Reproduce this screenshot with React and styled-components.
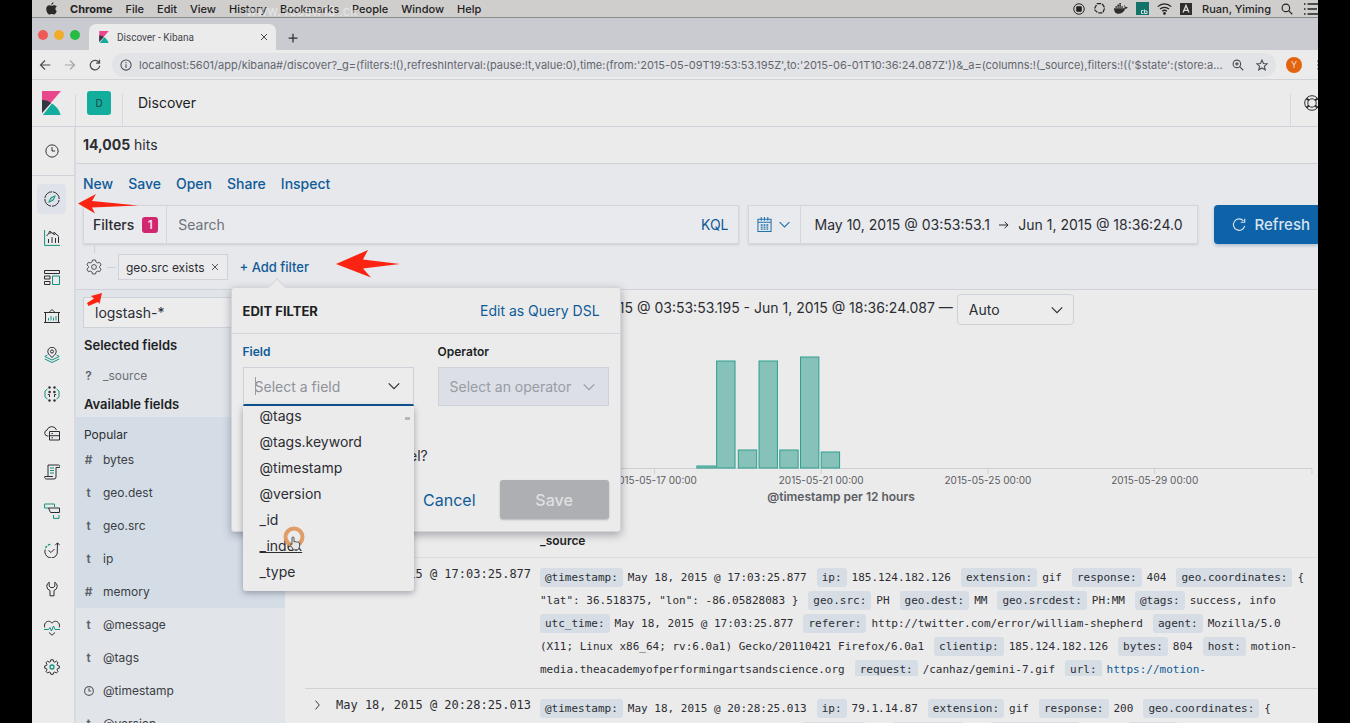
import React from "react";
import styled, { createGlobalStyle, css } from "styled-components";

const c = {
  ink: "#2b2d33",
  soft: "#6d7178",
  blue: "#0f5b98",
  teal: "#14917f",
  line: "#cfd2d8",
  paper: "#ebebeb",
  panel: "#e7e8eb",
};

const GlobalStyle = createGlobalStyle`
  *, *::before, *::after { box-sizing: border-box; }
  body { margin: 0; background: #000; }
  body, button, input, select { font-family: Inter, "Liberation Sans", sans-serif; }
  button, input, select { margin: 0; padding: 0; border: 0; background: none; color: inherit; font-size: inherit; outline: 0; }
  button { cursor: pointer; }
  a { text-decoration: none; color: inherit; }
  h1, h2, h3, ul, p { margin: 0; padding: 0; list-style: none; font-weight: inherit; }
  svg { display: block; flex: none; }
`;

/* ---------- frame ---------- */

const Stage = styled.div`
  height: 100vh;
  padding: 0 32px;
  overflow: hidden;
`;

const Screen = styled.div`
  position: relative;
  display: flex;
  flex-direction: column;
  height: 100%;
  overflow: hidden;
  background: ${c.paper};
  color: ${c.ink};
  font-size: 13px;
`;

/* ---------- mac menu bar ---------- */

const MenuBar = styled.header`
  position: relative;
  display: flex;
  align-items: center;
  gap: 13px;
  height: 18px;
  padding-left: 14px;
  flex: none;
  overflow: hidden;
  background: #cfcecd;
  border-bottom: 1px solid #8b8b8b;
  font-size: 11px;
  color: #222;
`;

const MenuItem = styled.span`
  font-weight: ${(p) => (p.$strong ? 700 : 500)};
  white-space: nowrap;
`;

const Watermark = styled.span`
  position: absolute;
  left: 214px;
  top: 4px;
  font-size: 13px;
  line-height: 14px;
  color: rgba(255, 255, 255, 0.5);
`;

const Tray = styled.div`
  display: flex;
  align-items: center;
  gap: 10px;
  margin-left: auto;
  margin-right: -1px;
`;

const TrayIcons = styled.div`
  display: flex;
  align-items: center;
  gap: 8px;
`;

/* ---------- browser chrome ---------- */

const TabStrip = styled.div`
  display: flex;
  align-items: flex-end;
  height: 32px;
  flex: none;
  padding-left: 6px;
  background: #cacbd0;
`;

const Lights = styled.div`
  display: flex;
  gap: 6px;
  padding-bottom: 10px;
  margin-right: 9px;
`;

const Light = styled.span`
  width: 10px;
  height: 10px;
  border-radius: 50%;
  background: ${(p) => p.$color};
`;

const BrowserTab = styled.div`
  display: flex;
  align-items: center;
  gap: 8px;
  width: 187px;
  height: 26px;
  padding: 0 8px 0 10px;
  border-radius: 7px 7px 0 0;
  background: ${c.paper};
  font-family: Roboto, sans-serif;
  font-size: 10px;
  color: #45474c;
`;

const TabClose = styled.button`
  margin-left: auto;
`;

const NewTab = styled.button`
  padding: 0 0 7px 12px;
`;

const AddressRow = styled.div`
  display: flex;
  align-items: center;
  height: 30px;
  flex: none;
  padding-left: 7px;
  border-bottom: 1px solid #d2d3d8;
  overflow: hidden;
`;

const NavButtons = styled.div`
  display: flex;
  gap: 13px;
  color: #4c4f55;
`;

const UrlField = styled.label`
  display: flex;
  align-items: center;
  flex: 1;
  gap: 7px;
  height: 24px;
  margin: 0 10px 0 11px;
  padding: 0 8px;
  border-radius: 12px;
  background: #e2e3e7;
  color: #4c4f55;
`;

const UrlInput = styled.input`
  flex: 1;
  min-width: 0;
  font-size: 11px;
  color: #63666c;
`;

const UrlTools = styled.span`
  display: flex;
  gap: 12px;
`;

const Account = styled.button`
  width: 16px;
  height: 16px;
  margin-right: 15px;
  border-radius: 50%;
  background: #e2640f;
  color: #f4dccb;
  font-size: 9px;
  line-height: 16px;
`;

const Dots = styled.span`
  width: 3px;
  margin-right: -2px;
`;

/* ---------- kibana header ---------- */

const AppHeader = styled.header`
  display: flex;
  align-items: center;
  height: 47px;
  flex: none;
  border-bottom: 1px solid ${c.line};
  overflow: hidden;
`;

const HeaderCell = styled.div`
  display: flex;
  align-items: center;
  height: 32px;
  align-self: flex-end;
  padding-bottom: 15px;
  ${(p) => p.$line && css`border-left: 1px solid #d7d9dd;`}
`;

const LogoCell = styled(HeaderCell)`
  width: 43px;
  padding-left: 10px;
  overflow: visible;
`;

const SpaceCell = styled(HeaderCell)`
  width: 47px;
  padding-left: 11px;
`;

const TitleCell = styled(HeaderCell)`
  flex: 1;
  padding-left: 15px;
`;

const HelpCell = styled(HeaderCell)`
  width: 28px;
  padding-left: 13px;
`;

const Avatar = styled.span`
  width: 24px;
  height: 24px;
  border-radius: 3px;
  background: #12ad9c;
  color: #17544f;
  font-size: 10px;
  font-weight: 500;
  line-height: 24px;
  text-align: center;
`;

const PageTitle = styled.h1`
  font-size: 14px;
  font-weight: 400;
  color: #1d1f24;
`;

const Body = styled.div`
  display: flex;
  flex: 1;
  min-height: 0;
`;

/* ---------- side navigation ---------- */

const SideNav = styled.nav`
  width: 44px;
  flex: none;
  border-right: 2px solid #d8dadf;
`;

const NavRecent = styled.div`
  height: 49px;
  padding: 9px 5px;
  margin-bottom: 3px;
  border-bottom: 1px solid ${c.line};
`;

const NavList = styled.ul`
  display: flex;
  flex-direction: column;
  gap: 9px;
  padding: 5px;
`;

const NavLink = styled.a`
  display: flex;
  align-items: center;
  justify-content: center;
  width: 29px;
  height: 30px;
  border-radius: 4px;
  background: ${(p) => (p.$active ? "#dfe2e8" : "transparent")};
`;

/* ---------- main ---------- */

const Main = styled.main`
  display: flex;
  flex-direction: column;
  flex: 1;
  min-width: 0;
`;

const Hits = styled.p`
  height: 37px;
  flex: none;
  padding-left: 7px;
  border-bottom: 1px solid ${c.line};
  font-size: 14px;
  line-height: 35px;
`;

const QueryArea = styled.section`
  flex: none;
  padding: 7px 0 9px 7px;
  background: ${c.panel};
  border-bottom: 1px solid ${c.line};
`;

const TopMenu = styled.div`
  display: flex;
  gap: 15px;
  height: 24px;
  margin-bottom: 10px;
`;

const LinkButton = styled.button`
  color: ${c.blue};
  font-size: ${(p) => p.$size || 14}px;
  font-weight: ${(p) => p.$weight || 500};
  white-space: nowrap;
`;

const QueryRow = styled.div`
  display: flex;
  height: 39px;
  margin-bottom: 10px;
`;

const boxed = css`
  display: flex;
  align-items: center;
  border: 1px solid #d4d6dc;
  box-shadow: 0 1px 2px rgba(60, 70, 90, 0.16);
  background: #e9eaed;
`;

const SearchBox = styled.div`
  ${boxed}
  flex: 1;
  min-width: 0;
  margin-right: 9px;
`;

const FiltersButton = styled.button`
  display: flex;
  align-items: center;
  gap: 8px;
  height: 100%;
  padding: 0 8px 0 9px;
  border-right: 1px solid #d4d6dc;
  font-size: 14px;
  font-weight: 500;
`;

const Badge = styled.span`
  width: 16px;
  height: 16px;
  border-radius: 3px;
  background: #d02770;
  color: #f5dfe8;
  font-size: 12px;
  font-weight: 600;
  line-height: 16px;
`;

const SearchInput = styled.input`
  flex: 1;
  min-width: 0;
  padding-left: 11px;
  font-size: 14px;
  &::placeholder { color: ${c.soft}; opacity: 1; }
`;

const Kql = styled(LinkButton)`
  padding: 0 9px;
  font-weight: 400;
`;

const DateBox = styled.div`
  ${boxed}
  width: 450px;
  margin-right: 16px;
`;

const QuickDate = styled.button`
  display: flex;
  align-items: center;
  gap: 6px;
  height: 100%;
  padding: 0 9px 0 8px;
  border-right: 1px solid #d4d6dc;
  color: #2271ad;
`;

const DateRange = styled.div`
  display: flex;
  align-items: center;
  justify-content: space-between;
  flex: 1;
  padding: 0 14px;
  font-size: 14px;
`;

const DateButton = styled.button`
  white-space: nowrap;
`;

const Refresh = styled.button`
  display: flex;
  align-items: center;
  gap: 9px;
  padding: 0 8px 0 18px;
  border-radius: 4px 0 0 4px;
  background: #0e62a8;
  box-shadow: 0 2px 3px rgba(20, 80, 140, 0.25);
  color: #d9e4ee;
  font-size: 15px;
  font-weight: 500;
`;

const FilterRow = styled.div`
  display: flex;
  align-items: center;
  height: 26px;
`;

const FilterGear = styled.button`
  position: relative;
  padding: 0 4px 0 3px;
  color: #50545b;
  &::before {
    content: "";
    position: absolute;
    left: 11px;
    bottom: 22px;
    height: 9px;
    border-left: 1px solid ${c.line};
  }
`;

const Dash = styled.span`
  width: 9px;
  margin: 0 2px 0 1px;
  border-top: 1px solid ${c.line};
`;

const Pill = styled.span`
  display: flex;
  align-items: center;
  gap: 6px;
  height: 26px;
  padding: 0 8px 0 7px;
  margin-right: 12px;
  border: 1px solid ${c.line};
  background: #ebebed;
  font-size: 12px;
  white-space: nowrap;
`;

/* ---------- filter popover ---------- */

const PopoverAnchor = styled.div`
  position: relative;
`;

const Popover = styled.form`
  position: absolute;
  z-index: 3;
  top: 28px;
  left: -9px;
  width: 390px;
  border: 1px solid #d3d5da;
  border-radius: 3px;
  background: ${c.paper};
  box-shadow: 0 3px 8px rgba(50, 50, 70, 0.38);
  &::before {
    content: "";
    position: absolute;
    top: -7px;
    left: 38px;
    width: 14px;
    height: 14px;
    background: ${c.paper};
    border: 1px solid #d3d5da;
    border-width: 1px 0 0 1px;
    transform: rotate(45deg);
  }
`;

const PopoverHead = styled.div`
  position: relative;
  display: flex;
  align-items: center;
  justify-content: space-between;
  height: 46px;
  padding: 0 20px 0 11px;
  border-bottom: 1px solid #d3d5da;
`;

const PopoverTitle = styled.h2`
  font-size: 13px;
  font-weight: 700;
  color: #1d1f24;
`;

const PopoverBody = styled.div`
  padding: 10px 11px 12px;
`;

const FieldGrid = styled.div`
  display: grid;
  grid-template-columns: 1fr 1fr;
  gap: 24px;
`;

const FormField = styled.div`
  position: relative;
`;

const FieldLabel = styled.label`
  display: block;
  height: 23px;
  font-size: 12px;
  font-weight: 600;
  line-height: 16px;
  color: ${(p) => (p.$focused ? c.blue : "#1d1f24")};
`;

const SelectShell = styled.div`
  position: relative;
  display: flex;
  align-items: center;
  width: ${(p) => p.$width || "100%"};
  height: ${(p) => p.$height || 39}px;
  border: 1px solid #cdd1d8;
  border-radius: ${(p) => (p.$round ? 4 : 0)}px;
  background: ${(p) => (p.$disabled ? "#dcdfe6" : "#ececed")};
  color: ${(p) => (p.$disabled ? "#989ca5" : c.ink)};
  font-size: 14px;
  ${(p) => p.$focused && css`border-bottom: 2px solid #0d5493;`}

  input, select {
    width: 100%;
    height: 100%;
    padding: 0 32px 0 11px;
    appearance: none;
    opacity: 1;
  }
  input::placeholder { color: #8f9299; opacity: 1; }
  svg { position: absolute; right: ${(p) => p.$inset || 12}px; pointer-events: none; }
`;

const Caret = styled.span`
  position: absolute;
  left: 11px;
  height: 18px;
  border-left: 1px solid #9a9ca2;
`;

const OptionList = styled.ul`
  position: absolute;
  z-index: 1;
  top: 100%;
  left: 0;
  right: 0;
  height: 185px;
  padding-left: 17px;
  overflow: hidden;
  border-radius: 0 0 3px 3px;
  background: ${c.paper};
  box-shadow: 0 2px 6px rgba(50, 50, 70, 0.4);
  &::after {
    content: "";
    position: absolute;
    top: 11px;
    right: 4px;
    width: 5px;
    height: 3px;
    background: #b5b7bb;
  }
`;

const Option = styled.li`
  height: 26px;
  font-size: 14px;
  line-height: 20px;
  text-decoration: ${(p) => (p.$hover ? "underline" : "none")};
`;

const Pointer = styled.span`
  position: absolute;
  top: 119px;
  left: 40px;
`;

const CustomLabel = styled.label`
  display: flex;
  align-items: center;
  gap: 14px;
  height: 24px;
  margin: 37px 0 13px;
  font-size: 14px;
`;

const Switch = styled.input`
  appearance: none;
  width: 32px;
  height: 16px;
  border-radius: 8px;
  background: #b6b9bf;
`;

const PopoverFoot = styled.div`
  display: flex;
  justify-content: flex-end;
  gap: 24px;
`;

const SaveButton = styled.button`
  width: 109px;
  height: 39px;
  border-radius: 3px;
  background: #adafb3;
  box-shadow: 0 1px 2px rgba(60, 60, 70, 0.3);
  color: #dfe0e2;
  font-size: 16px;
  font-weight: 500;
`;

/* ---------- field sidebar ---------- */

const Content = styled.div`
  display: flex;
  flex: 1;
  min-height: 0;
`;

const Sidebar = styled.aside`
  width: 209px;
  flex: none;
  overflow: hidden;
  background: #e1e4e8;
`;

const PatternPicker = styled.div`
  padding: 7px 0 5px 7px;
`;

const GroupTitle = styled.h3`
  height: 24px;
  padding-left: 8px;
  font-size: 13px;
  font-weight: 600;
  line-height: 24px;
  color: #1d1f24;
`;

const FieldList = styled.ul`
  ${(p) => p.$spaced && css`padding-top: 2px;`}
  ${(p) => p.$popular && css`
    margin-top: 1px;
    background: #d4dde6;
  `}
`;

const PopularLabel = styled.p`
  height: 26px;
  padding: 9px 0 0 8px;
  font-size: 12px;
  line-height: 18px;
`;

const FieldItem = styled.li`
  display: grid;
  grid-template-columns: 19px 1fr;
  align-items: center;
  height: 33px;
  padding-left: 8px;
  font-size: 12px;
  color: ${(p) => (p.$muted ? c.soft : "#3a3d44")};
`;

const TypeMark = styled.span`
  width: 9px;
  font-weight: 600;
  text-align: center;
  color: #5b5f67;
`;

/* ---------- results ---------- */

const Results = styled.section`
  flex: 1;
  min-width: 0;
  overflow: hidden;
`;

const RangeLine = styled.div`
  display: flex;
  align-items: center;
  justify-content: center;
  gap: 4px;
  padding: 4px 0 0 18px;
  font-size: 14px;
  line-height: 16px;
  white-space: nowrap;
`;

const RangeText = styled.span`
  padding-bottom: 3px;
`;

const ChartBox = styled.div`
  height: 183px;
  padding: 0 6px 0 85px;
`;

const ChartSvg = styled.svg`
  width: 100%;
  height: 180px;
  overflow: visible;
  text { font-family: Inter, sans-serif; font-size: 10px; fill: #5a5d63; text-anchor: middle; }
  .title { font-size: 12px; font-weight: 600; }
`;

const DocTable = styled.table`
  width: calc(100% - 20px);
  margin: 15px 0 0 20px;
  border-collapse: separate;
  border-spacing: 0;
  table-layout: fixed;
  font-family: "DejaVu Sans Mono", monospace;
  font-size: 11px;
`;

const Th = styled.th`
  width: ${(p) => p.$width || "auto"};
  height: 35px;
  padding: 0;
  border-bottom: 1px solid #dcdde1;
  font-family: Inter, sans-serif;
  font-size: 12px;
  font-weight: 600;
  text-align: left;
  color: #1d1f24;
`;

const Td = styled.td`
  padding: 8px 0 0;
  border-bottom: 1px solid #cfd1d5;
  vertical-align: top;
  line-height: 16px;
  white-space: nowrap;
`;

const TimeCell = styled(Td)`
  font-size: 12px;
`;

const Expand = styled.button`
  display: block;
  padding: 3px 0 0 8px;
`;

const Source = styled.div`
  max-height: 110px;
  margin-bottom: 12px;
  overflow: hidden;
  line-height: 23px;
`;

const Key = styled.span`
  padding: 3px 5px;
  margin-right: 5px;
  border-radius: 3px;
  background: #d6dde5;
`;

const Val = styled.span`
  margin-right: 10px;
`;

const DocLink = styled.a`
  color: ${c.blue};
`;

/* ---------- annotations ---------- */

const Marker = styled.svg`
  position: absolute;
  z-index: 5;
  left: ${(p) => p.$x}px;
  top: ${(p) => p.$y}px;
  fill: #fb2413;
`;

/* ---------- icons ---------- */

const Ico = ({ size = 16, children, w = 1, box = 16, ...rest }) => (
  <svg width={size} height={size} viewBox={`0 0 ${box} ${box}`} fill="none" stroke="currentColor" strokeWidth={w} aria-hidden="true" {...rest}>
    {children}
  </svg>
);

const Chevron = ({ size = 14 }) => (
  <Ico size={size}><path d="M2 5l6 6 6-6" strokeWidth="1.3" /></Ico>
);

const Cross = ({ size = 8, w = 1.6 }) => (
  <Ico size={size} w={w}><path d="M2 2l12 12M14 2L2 14" /></Ico>
);

const KibanaMark = ({ width, height }) => (
  <svg width={width} height={height} viewBox="0 0 19 24" aria-hidden="true">
    <path d="M0 0h19L0 22z" fill="#e8478b" />
    <path d="M0 9c4 0 7 1 9 3L0 22z" fill="#343741" />
    <path d="M10 12.500c4 2.500 7.500 6.500 8.500 11.500H0.800z" fill="#12ad9c" />
  </svg>
);

const GearIcon = ({ size = 16 }) => (
  <Ico size={size}>
    <circle cx="8" cy="8" r="2.400" />
    <path d="M6.500 1h3l.5 2 1.600.9 2-.6 1.500 2.600-1.500 1.400v1.400l1.500 1.400-1.500 2.600-2-.6-1.600.9-.5 2h-3l-.5-2-1.600-.9-2 .6L.9 10.100l1.500-1.400V7.300L.9 5.900l1.500-2.600 2 .6L6 3z" />
  </Ico>
);

const ClockIcon = ({ size = 14, w = 1.1 }) => (
  <Ico size={size} w={w}><circle cx="8" cy="8" r="7" /><path d="M8 3.500V8H4.500" transform="matrix(-1 0 0 1 16 0)" /></Ico>
);

const t = c.teal;
const navIcons = [
  ["Discover", <><circle cx="8" cy="8" r="7.200" strokeDasharray="10.300 1" strokeDashoffset="-1" /><path d="M11.200 4.800L9.200 9.200 4.800 11.200l2-4.400z" stroke={t} fill={t} fillOpacity=".3" /></>],
  ["Visualize", <><path d="M.6 0v15.400H16" stroke={t} /><path d="M4.500 13V9M8 13V7M11.500 13V8M14.500 13V7" /><path d="M2.500 6l2.700-3M6.800 2.500l2.500 1M10.800 3L15 6.500" /><circle cx="6" cy="2.300" r="1" /><circle cx="10.200" cy="3.500" r="1" /></>],
  ["Dashboard", <><path d="M.5 1.500h15v3H.5zM.5 7h5.500v3H.5zM.5 12.500h5.500v3H.5z" /><path d="M8.500 7h7v8.500h-7z" stroke={t} /></>],
  ["Canvas", <><path d="M1.500 4.500h13v10h-13zM0 4.500h16M0 14.500h16M5 4.500L8 1.500l3 3" /><path d="M4.500 12.500V10M7 12.500V8M9.500 12.500V9.500M12 12.500V8" stroke={t} /></>],
  ["Maps", <><path d="M8 10.500C5 7.800 3.800 6.300 3.800 4.500a4.200 4.200 0 018.400 0c0 1.800-1.200 3.300-4.200 6z" /><circle cx="8" cy="4.500" r="1.500" /><path d="M3.500 8L.8 9.500 8 13l7.200-3.500L12.500 8M.8 12L8 15.500l7.200-3.500" stroke={t} /></>],
  ["Machine learning", <><path d="M3.500 3L1 5v6l2.500 2M12.500 3L15 5v6l-2.500 2" stroke={t} /><g fill="currentColor" stroke="none"><circle cx="5.500" cy="1.500" r="1.200" /><circle cx="10.500" cy="1.500" r="1.200" /><circle cx="5.500" cy="14.500" r="1.200" /><circle cx="10.500" cy="14.500" r="1.200" /><circle cx="5.600" cy="6" r="1.200" /><circle cx="10.400" cy="6" r="1.200" /></g><path d="M5.500 11V8.500H3.800M10.500 11V8.500h1.700" /></>],
  ["Infrastructure", <><path d="M4.500 11H3.500A3 3 0 013 5.100 5 5 0 0112.500 5" /><path d="M5.500 6.500h10v8.500h-10zM5.500 10.700h10M7.500 8.600h1.500M7.500 12.800h1.500" /></>],
  ["Logs", <><path d="M4 12V1h10.500a1.500 1.500 0 011 2.500H12V13a2 2 0 01-2 2H2.500A1.800 1.800 0 01.8 12.500H9" /><path d="M6 4h4M6 6.500h4M6 9h4" stroke={t} /></>],
  ["APM", <><path d="M10.500 4V1H.6v4h4" stroke={t} /><path d="M4.500 5h11v4.500H6.500z" /><path d="M9.500 12v3.400h5.500V12" stroke={t} /></>],
  ["Uptime", <><path d="M1.200 7.500a6.300 6.300 0 1012 4.200L13.500 1" /><path d="M1.500 6A6.300 6.300 0 017.500 2.300" stroke={t} strokeWidth="1.400" strokeDasharray="2.500 1.200" /><path d="M4.500 8.500l2.500 2 3.500-3.500M11.300 3.200L13.500.8l2.200 2.400" /></>],
  ["Dev Tools", <path d="M5.200 1.200A4.500 4.500 0 006 9.500V14.800h4V9.500a4.500 4.500 0 00.8-8.300V5L9.500 6.500h-3L5.200 5z" />],
  ["Monitoring", <><path d="M.8 7.500C-.3 4 2 1.300 4.500 1.300 6 1.300 7.200 2 8 3.200 8.800 2 10 1.300 11.500 1.300c2.500 0 4.800 2.700 3.700 6.200M5 12.500l3 2.700 3-2.700" /><path d="M0 9.500h4.500l1.500-2 1.500 3.500 2-5 1.500 3.500h5" stroke={t} /></>],
  ["Management", <><circle cx="8" cy="8" r="2" stroke={t} strokeWidth="1.300" /><path d="M6.800.8h2.400l.4 1.900 1.200.5 1.600-1.100 1.600 1.600-1 1.600.5 1.200 1.800.4v2.300l-1.800.4-.5 1.200 1 1.600-1.600 1.600-1.600-1-1.200.5-.4 1.800H6.800l-.4-1.800-1.200-.5-1.600 1L2 12.400l1-1.600-.5-1.200-1.800-.4V6.900l1.800-.4.5-1.200-1-1.600L3.600 2.100l1.600 1.100 1.200-.5z" /></>],
];

/* ---------- data ---------- */

const URL_TEXT =
  "localhost:5601/app/kibana#/discover?_g=(filters:!(),refreshInterval:(pause:!t,value:0),time:(from:'2015-05-09T19:53:53.195Z',to:'2015-06-01T10:36:24.087Z'))&_a=(columns:!(_source),filters:!(('$state':(store:a...";

const popular = [["#", "bytes"], ["t", "geo.dest"], ["t", "geo.src"], ["t", "ip"], ["#", "memory"]];
const others = [["t", "@message"], ["t", "@tags"], ["clock", "@timestamp"], ["t", "@version"]];
const options = ["@tags", "@tags.keyword", "@timestamp", "@version", "_id", "_index", "_type"];

/* horizontal values are per mille of the plot width, heights are in pixels */
const bars = [[347, 2], [368, 107], [391, 18], [413, 107], [435, 18], [457, 111], [479, 16]];
const ticks = [[125, "2015-05-13 00:00"], [302, "2015-05-17 00:00"], [479, "2015-05-21 00:00"], [656, "2015-05-25 00:00"], [833, "2015-05-29 00:00"]];

const docs = [
  {
    time: "May 18, 2015 @ 17:03:25.877",
    lines: [
      [["@timestamp:", "May 18, 2015 @ 17:03:25.877"], ["ip:", "185.124.182.126"], ["extension:", "gif"], ["response:", "404"], ["geo.coordinates:", "{"]],
      [[null, '"lat": 36.518375, "lon": -86.05828083 }'], ["geo.src:", "PH"], ["geo.dest:", "MM"], ["geo.srcdest:", "PH:MM"], ["@tags:", "success, info"]],
      [["utc_time:", "May 18, 2015 @ 17:03:25.877"], ["referer:", "http://twitter.com/error/william-shepherd"], ["agent:", "Mozilla/5.0"]],
      [[null, "(X11; Linux x86_64; rv:6.0a1) Gecko/20110421 Firefox/6.0a1"], ["clientip:", "185.124.182.126"], ["bytes:", "804"], ["host:", "motion-"]],
      [[null, "media.theacademyofperformingartsandscience.org"], ["request:", "/canhaz/gemini-7.gif"], ["url:", "https://motion-", true]],
    ],
  },
  {
    time: "May 18, 2015 @ 20:28:25.013",
    lines: [
      [["@timestamp:", "May 18, 2015 @ 20:28:25.013"], ["ip:", "79.1.14.87"], ["extension:", "gif"], ["response:", "200"], ["geo.coordinates:", "{"]],
      [[null, '"lat": 35.16531, "lon": -107.9006142 }'], ["geo.src:", "GN"], ["geo.dest:", "US"], ["geo.srcdest:", "GN:US"], ["@tags:", "success, info"]],
    ],
  },
];

/* ---------- pieces ---------- */

function SystemBar() {
  return (
    <MenuBar>
      <svg width="11" height="13" viewBox="0 0 14 16" aria-hidden="true">
        <path d="M9.500 0c.1 1.600-1.200 3.200-2.800 3.200C6.500 1.700 8 .2 9.500 0zM12 8.300c0-1.500.8-2.300 1.700-2.900-1-1.400-2.400-1.600-3.300-1.600-1.300 0-2.200.7-3 .7-.8 0-1.800-.7-3-.7C2 3.900.3 5.700.3 8.600c0 3.300 2.300 7.100 4.100 7.100 1 0 1.500-.7 2.900-.7s1.700.7 2.900.7c1.500 0 2.900-2.400 3.500-4.400-1-.4-1.700-1.500-1.700-3z" fill="#2a2a2a" />
      </svg>
      <MenuItem $strong>Chrome</MenuItem>
      {["File", "Edit", "View", "History", "Bookmarks", "People", "Window", "Help"].map((m) => (
        <MenuItem key={m}>{m}</MenuItem>
      ))}
      <Watermark>www. rcuew18 .ck</Watermark>
      <Tray>
        <TrayIcons>
          <Ico size={12} w={1.3}><circle cx="8" cy="8" r="7" /><path d="M5 5h6v6H5z" fill="currentColor" /></Ico>
          <Ico size={13} w={1.5}><path d="M5 2h6l3.500 5-2.500 6.500H6L1.500 9z" strokeDasharray="5 1.500" /></Ico>
          <svg width="14" height="11" viewBox="0 0 20 15" fill="#2e2e2e" aria-hidden="true">
            <path d="M0 7h15c.4-1.600 0-2.500-.7-3.400l.8-.8c1 .8 1.300 1.700 1.300 2.700 1.200-.2 2.400 0 3.200.5-.6 1.400-2 1.900-3.500 1.900C14.500 12 11.500 15 7 15 2 15 0 12 0 7zM2 4.300h2.200v2H2zM4.800 4.300H7v2H4.800zM7.600 4.300h2.200v2H7.600zM10.400 4.300h2.200v2h-2.200zM4.800 1.800H7v2H4.800zM7.600 1.800h2.200v2H7.600zM7.600-.5h2.200v1.800H7.600z" />
          </svg>
          <svg width="13" height="13" viewBox="0 0 13 13" aria-hidden="true">
            <path d="M0 0h13v13H0z" fill="#147368" />
            <path d="M7.500 8.500h-2v3h2M8.500 7.500v4h2.500v-2.500H8.500" stroke="#cfe3df" fill="none" />
          </svg>
          <Ico size={15} w={1.3}><path d="M.8 6a10.500 10.500 0 0114.400 0M3.200 8.600a7 7 0 019.600 0M5.500 11a3.700 3.700 0 015 0" /><circle cx="8" cy="13.200" r=".8" fill="currentColor" /></Ico>
          <svg width="12" height="12" viewBox="0 0 12 12" aria-hidden="true">
            <path d="M0 0h12v12H0z" fill="#2e2e2e" />
            <path d="M3 9.500L6 2.500l3 7M4 7.300h4" stroke="#dcdcdc" fill="none" strokeWidth="1.300" />
          </svg>
        </TrayIcons>
        <MenuItem>Ruan, Yiming</MenuItem>
        <Ico size={12} w={1.5}><circle cx="6.500" cy="6.500" r="5" /><path d="M10.200 10.200L15 15" /></Ico>
        <Ico size={16} w={1.5}><path d="M1 3h1.500M1 8h1.500M1 13h1.500M4.500 3H16M4.500 8H14M4.500 13H16" /></Ico>
      </Tray>
    </MenuBar>
  );
}

function BrowserChrome() {
  return (
    <>
      <TabStrip>
        <Lights>
          <Light $color="#ee5a55" />
          <Light $color="#f0ad2c" />
          <Light $color="#27bb43" />
        </Lights>
        <BrowserTab>
          <KibanaMark width={10} height={12} />
          <span>Discover - Kibana</span>
          <TabClose aria-label="Close tab"><Cross size={8} w={2} /></TabClose>
        </BrowserTab>
        <NewTab aria-label="New tab"><Ico size={10} w={2}><path d="M8 1v14M1 8h14" /></Ico></NewTab>
      </TabStrip>
      <AddressRow>
        <NavButtons>
          <button aria-label="Back"><Ico size={12} w={1.6}><path d="M15 8H2M8 2L2 8l6 6" /></Ico></button>
          <button aria-label="Forward"><Ico size={12} w={1.6} stroke="#a4a6ab"><path d="M1 8h13M8 2l6 6-6 6" /></Ico></button>
          <button aria-label="Reload"><Ico size={12} w={1.7}><path d="M13.500 5A6.300 6.300 0 1014.300 9M14 1v4.500H9.500" /></Ico></button>
        </NavButtons>
        <UrlField>
          <Ico size={12} w={1.4}><circle cx="8" cy="8" r="6.800" /><path d="M8 7v5M8 4v1.500" /></Ico>
          <UrlInput aria-label="Address" value={URL_TEXT} readOnly />
          <UrlTools>
            <Ico size={12} w={1.5}><circle cx="6.500" cy="6.500" r="5" /><path d="M10.200 10.200L15 15M4 6.500h5M6.500 4v5" /></Ico>
            <Ico size={12} w={1.5}><path d="M8 1.500l2 4.500 4.800.4-3.600 3.200 1.100 4.800L8 11.900l-4.300 2.500 1.100-4.800L1.200 6.400 6 6z" /></Ico>
          </UrlTools>
        </UrlField>
        <Account>Y</Account>
        <Dots><Ico size={12} stroke="none" fill="#4c4f55"><circle cx="2" cy="3" r="1.500" /><circle cx="2" cy="8" r="1.500" /><circle cx="2" cy="13" r="1.500" /></Ico></Dots>
      </AddressRow>
    </>
  );
}

function SelectBox({ label, value, options: list = [value], ...shell }) {
  return (
    <SelectShell {...shell}>
      <select aria-label={label} id={shell.$id} disabled={shell.$disabled} defaultValue={value}>
        {list.map((o) => <option key={o}>{o}</option>)}
      </select>
      <Chevron />
    </SelectShell>
  );
}

function FilterPopover() {
  return (
    <Popover onSubmit={(e) => e.preventDefault()}>
      <PopoverHead>
        <PopoverTitle>EDIT FILTER</PopoverTitle>
        <LinkButton type="button" $weight={400}>Edit as Query DSL</LinkButton>
      </PopoverHead>
      <PopoverBody>
        <FieldGrid>
          <FormField>
            <FieldLabel htmlFor="field" $focused>Field</FieldLabel>
            <SelectShell $focused>
              <Caret />
              <input id="field" placeholder="Select a field" />
              <Chevron />
            </SelectShell>
            <OptionList>
              {options.map((o) => <Option key={o} $hover={o === "_index"}>{o}</Option>)}
              <Pointer>
                <svg width="26" height="28" viewBox="0 0 26 28" aria-hidden="true">
                  <circle cx="11" cy="12" r="8.500" fill="none" stroke="#e0955a" strokeWidth="4" strokeOpacity=".9" />
                  <path d="M9 13c0-1.500 2-1.500 2 0v4l1-.5 1.500.5 1.500 0 1.500.8v4l-1.500 3h-4.500l-3-4.500c-.5-1 .5-1.600 1.500-.8z" fill="#e6e6e6" stroke="#555" />
                </svg>
              </Pointer>
            </OptionList>
          </FormField>
          <FormField>
            <FieldLabel htmlFor="operator">Operator</FieldLabel>
            <SelectBox $id="operator" label="Operator" value="Select an operator" $disabled />
          </FormField>
        </FieldGrid>
        <CustomLabel>
          <Switch type="checkbox" role="switch" />
          Create custom label?
        </CustomLabel>
        <PopoverFoot>
          <LinkButton type="button" $size={16} $weight={400}>Cancel</LinkButton>
          <SaveButton type="submit">Save</SaveButton>
        </PopoverFoot>
      </PopoverBody>
    </Popover>
  );
}

function QuerySection() {
  return (
    <QueryArea>
      <TopMenu>
        {["New", "Save", "Open", "Share", "Inspect"].map((m) => <LinkButton key={m}>{m}</LinkButton>)}
      </TopMenu>
      <QueryRow>
        <SearchBox>
          <FiltersButton>Filters <Badge>1</Badge></FiltersButton>
          <SearchInput aria-label="Search" placeholder="Search" />
          <Kql>KQL</Kql>
        </SearchBox>
        <DateBox>
          <QuickDate aria-label="Quick select">
            <Ico size={15} w={1.1}><path d="M1 2.500h14v13H1zM1 5.500h14M4.500 0v4M8 0v4M11.500 0v4" /><path d="M4 8.500h8M4 10.800h8M4 13h8" strokeDasharray="2 1" strokeWidth="1.400" /></Ico>
            <Chevron size={13} />
          </QuickDate>
          <DateRange>
            <DateButton>May 10, 2015 @ 03:53:53.1</DateButton>
            <Ico size={10} w={1.6}><path d="M0 8h14M9 3l5.500 5L9 13" /></Ico>
            <DateButton>Jun 1, 2015 @ 18:36:24.0</DateButton>
          </DateRange>
        </DateBox>
        <Refresh>
          <Ico size={14} w={1.3}><path d="M13 3.200A6.500 6.500 0 1014.500 9M14.500.8v4H10" /></Ico>
          Refresh
        </Refresh>
      </QueryRow>
      <FilterRow>
        <FilterGear aria-label="Filter options"><GearIcon /></FilterGear>
        <Dash />
        <Pill>geo.src exists <button aria-label="Remove filter"><Cross /></button></Pill>
        <PopoverAnchor>
          <LinkButton $size={13}>+ Add filter</LinkButton>
          <FilterPopover />
        </PopoverAnchor>
      </FilterRow>
    </QueryArea>
  );
}

const Fields = ({ items, ...rest }) => (
  <FieldList {...rest}>
    {rest.$popular && <li><PopularLabel>Popular</PopularLabel></li>}
    {items.map(([type, name]) => (
      <FieldItem key={name} $muted={type === "?"}>
        <TypeMark>{type === "clock" ? <ClockIcon size={10} w={1.8} /> : type}</TypeMark>
        {name}
      </FieldItem>
    ))}
  </FieldList>
);

function Histogram() {
  return (
    <ChartBox>
      <ChartSvg role="img" aria-label="Documents per 12 hours">
        <line x1="0" x2="100%" y1="143.500" y2="143.500" stroke="#cdcfd2" />
        {bars.map(([x, h]) => (
          <rect key={x} x={`${x / 10}%`} y={143 - h} width="1.950%" height={h} fill="#87c2ba" stroke="#2d9f8b" />
        ))}
        {ticks.map(([x, label]) => (
          <g key={x}>
            <line x1={`${x / 10}%`} x2={`${x / 10}%`} y1="144" y2="149" stroke="#cdcfd2" />
            <text x={`${x / 10}%`} y="159">{label}</text>
          </g>
        ))}
        <line x1="100%" x2="100%" y1="144" y2="149" stroke="#cdcfd2" />
        <text className="title" x="50%" y="176">@timestamp per 12 hours</text>
      </ChartSvg>
    </ChartBox>
  );
}

function Documents() {
  return (
    <DocTable>
      <thead>
        <tr><Th $width="31px" aria-label="Expand" /><Th $width="204px">Time</Th><Th>_source</Th></tr>
      </thead>
      <tbody>
        {docs.map((d) => (
          <tr key={d.time}>
            <Td><Expand aria-label="Toggle row"><Ico size={10} w={1.5}><path d="M4 1l6 7-6 7" /></Ico></Expand></Td>
            <TimeCell>{d.time}</TimeCell>
            <Td>
              <Source>
                {d.lines.map((line, i) => (
                  <div key={i}>
                    {line.map(([k, v, link], j) => (
                      <React.Fragment key={j}>
                        {k && <Key>{k}</Key>}
                        {link ? <DocLink href="#">{v}</DocLink> : <Val>{v}</Val>}
                      </React.Fragment>
                    ))}
                  </div>
                ))}
              </Source>
            </Td>
          </tr>
        ))}
      </tbody>
    </DocTable>
  );
}

export default function App() {
  return (
    <>
      <GlobalStyle />
      <Stage>
        <Screen>
          <SystemBar />
          <BrowserChrome />
          <AppHeader>
            <LogoCell><KibanaMark width={19} height={24} /></LogoCell>
            <SpaceCell $line><Avatar>D</Avatar></SpaceCell>
            <TitleCell $line><PageTitle>Discover</PageTitle></TitleCell>
            <HelpCell $line>
              <Ico size={16}><circle cx="8" cy="8" r="7.300" /><circle cx="8" cy="8" r="4.200" /><path d="M2.500 3.500l2.500 2M13.500 3.500l-2.500 2M2.500 12.500l2.500-2M13.500 12.500l-2.500-2" strokeWidth="2" /></Ico>
            </HelpCell>
          </AppHeader>
          <Body>
            <SideNav>
              <NavRecent><NavLink href="#" aria-label="Recently viewed"><ClockIcon /></NavLink></NavRecent>
              <NavList>
                {navIcons.map(([name, art], i) => (
                  <li key={name}>
                    <NavLink href="#" aria-label={name} $active={i === 0}><Ico>{art}</Ico></NavLink>
                  </li>
                ))}
              </NavList>
            </SideNav>
            <Main>
              <Hits><b>14,005</b> hits</Hits>
              <QuerySection />
              <Content>
                <Sidebar>
                  <PatternPicker><SelectBox label="Index pattern" value="logstash-*" $height={31} /></PatternPicker>
                  <GroupTitle>Selected fields</GroupTitle>
                  <Fields items={[["?", "_source"]]} $spaced />
                  <GroupTitle>Available fields</GroupTitle>
                  <Fields items={popular} $popular />
                  <Fields items={others} />
                </Sidebar>
                <Results>
                  <RangeLine>
                    <RangeText>May 10, 2015 @ 03:53:53.195 - Jun 1, 2015 @ 18:36:24.087 —</RangeText>
                    <SelectBox label="Interval" value="Auto" $width="117px" $height={31} $inset={9} $round />
                  </RangeLine>
                  <Histogram />
                  <Documents />
                </Results>
              </Content>
            </Main>
          </Body>
          <Marker $x={46} $y={194} width="60" height="20" viewBox="0 0 60 20" aria-hidden="true">
            <path d="M0 9.500L18 0l-4 7 46 4.500-46 2 3 6z" />
          </Marker>
          <Marker $x={304} $y={250} width="64" height="28" viewBox="0 0 64 28" aria-hidden="true">
            <path d="M0 14L32 0l-5 9.500L64 14l-37 4.500 8 9z" />
          </Marker>
          <Marker $x={55} $y={293} width="16" height="13" viewBox="0 0 16 13" aria-hidden="true">
            <path d="M15 0L4 3l3 2.500L0 10l1.500 3L11 9l1.500 2z" />
          </Marker>
        </Screen>
      </Stage>
    </>
  );
}
